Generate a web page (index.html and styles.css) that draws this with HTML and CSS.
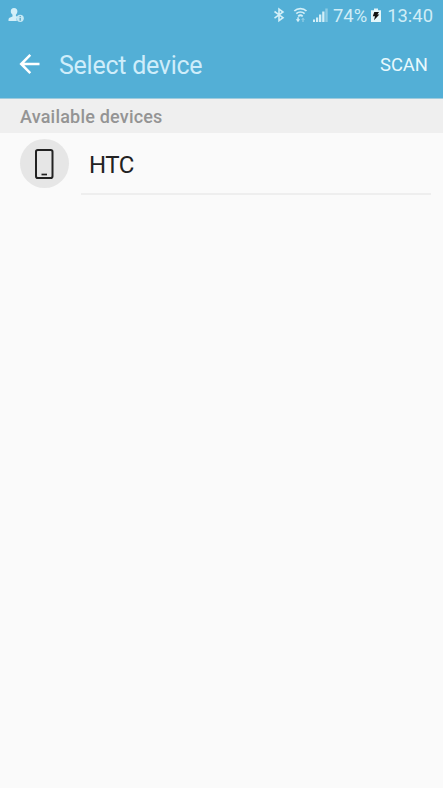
FILE: index.html
```html
<!DOCTYPE html>
<html lang="en">
<head>
    <meta charset="UTF-8">
    <meta name="viewport" content="width=device-width, initial-scale=1.0">
    <title>Select device</title>
    <link rel="stylesheet" href="styles.css">
</head>
<body>
    <header class="header">
        <div class="status-bar">
            <svg class="icon-user" width="16" height="16" viewBox="0 0 16 16">
                <path fill="#d3eff8" d="M6 1c2.300 0 3.400 1.500 3.400 3.300 0 1.600-.7 2.700-1.500 3.500v1.200l1.600.8a4 4 0 0 0-.7 4.200H.5v-1.500c0-1.600 1.400-2 4-3.100V7.800C3.500 7 2.800 6 2.800 4.300 2.800 2.500 3.800 1 6 1z"/>
                <circle cx="12.200" cy="11.300" r="3.600" fill="#c5e8f4"/>
                <path stroke="#5ba5c4" stroke-width="1.300" d="M12.200 8.900v1.200M12.200 10.800v3"/>
            </svg>
            <svg class="icon-bluetooth" width="12" height="16" viewBox="0 0 12 16">
                <path fill="none" stroke="#d3eff8" stroke-width="1.600" d="M1.500 4.500l8.500 6.200L6 13.700V2l4 3-8.500 6.200"/>
            </svg>
            <svg class="icon-wifi" width="16" height="16" viewBox="0 0 16 16">
                <g fill="none" stroke="#d3eff8" stroke-width="1.700">
                    <path d="M1.300 4c3.300-3.300 8.900-3.300 12.200 0"/>
                    <path d="M3.300 6.700c2.300-2.300 6-2.300 8.300 0"/>
                    <path d="M5.200 9.300c1.300-1.200 3.200-1.200 4.500 0"/>
                </g>
                <path fill="#d3eff8" d="M4.300 10.300h1.500v2h1.400L5 15.300l-2.200-3h1.500z"/>
                <path fill="#8ccbe3" d="M9.300 15v-2.200H8l2-2.400 2 2.400h-1.300V15z"/>
            </svg>
            <svg class="icon-signal" width="16" height="16" viewBox="0 0 16 16">
                <path fill="#d3eff8" d="M0 12.500h2V15H0zM3 10.500h2.200V15H3zM6 7.500h2.300V15H6zM9.200 4.500h2.300V15H9.200z"/>
                <path fill="#8dcce4" d="M12.300 1.500h2.400V15h-2.400z"/>
            </svg>
            <span class="battery-text">74%</span>
            <svg class="icon-battery" width="10" height="16" viewBox="0 0 10 16">
                <path fill="#e4f6fa" d="M3 1.500h4v1.700h3V15H0V3.200H3z"/>
                <path fill="#111" d="M3.300 5H8L6.400 7.500h2L3 13.300l1-4H1.800z"/>
            </svg>
            <span class="clock">13:40</span>
        </div>
        <div class="toolbar">
            <svg class="icon-back" width="22" height="22" viewBox="0 0 22 22">
                <path fill="none" stroke="#fff" stroke-width="2.500" d="M20.500 10H2.500M11.300 0.900L2.200 10l9.100 9.100"/>
            </svg>
            <h1 class="title">Select device</h1>
            <div class="scan">SCAN</div>
        </div>
    </header>

    <div class="category">Available devices</div>

    <div class="device">
        <div class="device-icon">
            <svg width="20" height="30" viewBox="0 0 20 30">
                <rect x="1" y="1" width="16.500" height="28" rx="1.800" fill="none" stroke="#222" stroke-width="2"/>
                <path stroke="#222" stroke-width="1.700" d="M6.500 25.500H12"/>
            </svg>
        </div>
        <div class="device-name">HTC</div>
    </div>
</body>
</html>
```
FILE: styles.css
```css
body {
    font-family: Roboto, sans-serif;
    margin: 0;
    min-height: 100vh;
    background-color: #fafafa;
}

svg {
    display: block;
    flex: none;
}

.header {
    box-sizing: border-box;
    height: 99px;
    background: #53afd6;
    border-bottom: 1px solid #9fcbdd;
}

.status-bar {
    display: flex;
    align-items: center;
    height: 30px;
    padding: 0 10px 0 8px;
    color: #cfedf7;
    font-size: 18.4px;
}

.icon-user {
    margin-right: auto;
}

.icon-wifi {
    margin-left: 8px;
}

.icon-signal {
    margin-left: 4px;
}

.battery-text {
    margin-left: 4px;
}

.icon-battery {
    margin-left: 4px;
}

.clock {
    margin-left: 6px;
}

.toolbar {
    display: flex;
    align-items: center;
    height: 70px;
    padding: 0 15px 0 19px;
}

.title {
    flex: 1;
    margin: 0 0 0 18px;
    color: #cfedfa;
    font-size: 25px;
    font-weight: 400;
    letter-spacing: -0.25px;
}

.scan {
    padding-bottom: 2px;
    color: #e9f9fd;
    font-size: 18.4px;
}

.category {
    height: 34px;
    padding-left: 20px;
    background: #efefef;
    color: #949494;
    font-size: 18px;
    font-weight: 500;
    letter-spacing: 0.2px;
    line-height: 35px;
}

.device {
    display: flex;
    padding: 0 12px 0 20px;
}

.device-icon {
    display: flex;
    align-items: center;
    justify-content: center;
    width: 49px;
    height: 49px;
    margin: 6px 12px 0 0;
    border-radius: 50%;
    background: #e6e6e6;
}

.device-name {
    flex: 1;
    height: 60px;
    padding-left: 8px;
    border-bottom: 2px solid #eee;
    color: #222;
    font-size: 24px;
    letter-spacing: -0.5px;
    line-height: 64px;
}
```
